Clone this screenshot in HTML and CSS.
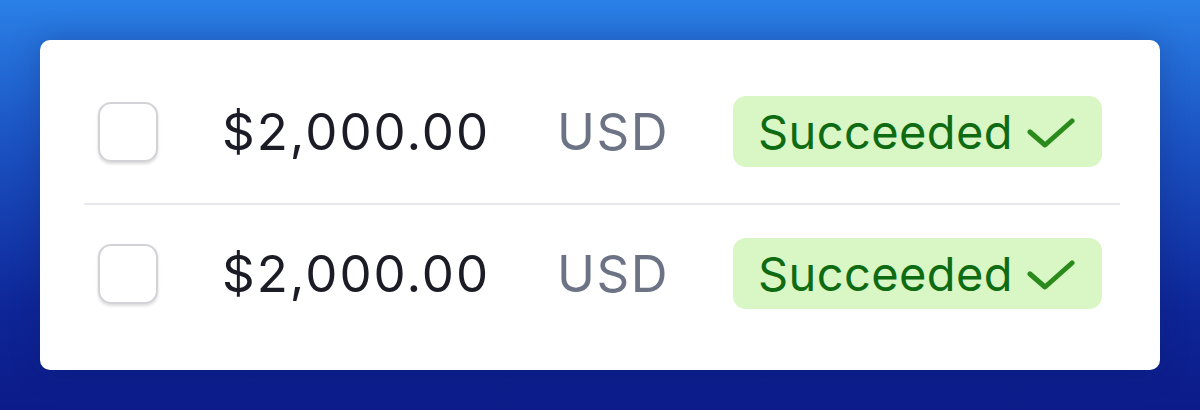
FILE: index.html
```html
<!DOCTYPE html>
<html>
<head>
    <meta charset="UTF-8">
    <title>Payments</title>
    <link rel="stylesheet" href="styles.css">
</head>
<body>
<div class="card">

    <div class="row">
        <span class="check"></span>
        <span class="amount">$2,000.00</span>
        <span class="currency">USD</span>
        <span class="badge">Succeeded
            <svg class="tick" width="48" height="30" viewBox="0 0 48 30">
                <path d="M3 14 L18 27 L45 3" fill="none" stroke="#2b8a1c" stroke-width="5" stroke-linecap="round" stroke-linejoin="round"/>
            </svg>
        </span>
    </div>

    <div class="row">
        <span class="check"></span>
        <span class="amount">$2,000.00</span>
        <span class="currency">USD</span>
        <span class="badge">Succeeded
            <svg class="tick" width="48" height="30" viewBox="0 0 48 30">
                <path d="M3 14 L18 27 L45 3" fill="none" stroke="#2b8a1c" stroke-width="5" stroke-linecap="round" stroke-linejoin="round"/>
            </svg>
        </span>
    </div>

</div>
</body>
</html>
```

FILE: styles.css
```css
html, body {
    height: 100%;
}

body {
    margin: 0;
    padding: 40px;
    box-sizing: border-box;
    background: linear-gradient(180deg, #2a80e6 0%, #1b52c2 35%, #0e2698 75%, #0c1b88 100%);
    font-family: Inter, "Liberation Sans", sans-serif;
}

.card {
    background: #fff;
    border-radius: 10px;
    height: 330px;
    box-sizing: border-box;
    padding: 56px 40px 0 44px;
    box-shadow: 0 0 30px rgba(10, 20, 80, 0.25);
}

.row {
    display: flex;
    align-items: center;
    height: 71px;
    padding: 0 18px 0 14px;
}

.row:first-child {
    padding-bottom: 36px;
    border-bottom: 2px solid #e8e9ef;
    margin-bottom: 33px;
}

.check {
    width: 56px;
    height: 56px;
    border: 2px solid #d2d2d7;
    border-radius: 13px;
    box-shadow: 0 2px 3px rgba(0, 0, 0, 0.14);
    flex: none;
}

.amount {
    margin-left: 64px;
    width: 335px;
    font-size: 51px;
    letter-spacing: 2px;
    color: #1b1c26;
}

.currency {
    width: 176px;
    font-size: 51px;
    letter-spacing: 1.5px;
    color: #6b7385;
}

.badge {
    flex: 1;
    height: 71px;
    display: flex;
    align-items: center;
    padding-left: 25px;
    background: #d8f7c4;
    border-radius: 13px;
    color: #0e6b12;
    font-size: 47px;
    letter-spacing: 0.4px;
}

.tick {
    margin-left: 14px;
    margin-top: 2px;
}
```
